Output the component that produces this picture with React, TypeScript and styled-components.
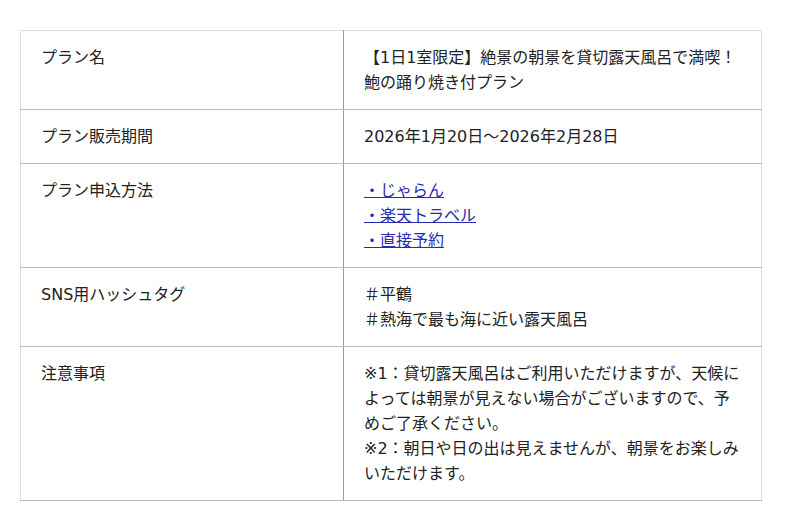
import styled, { createGlobalStyle } from "styled-components";

const GlobalStyle = createGlobalStyle`
    body {
        margin: 0;
        background: #fff;
        font-family: "DejaVu Sans", "Noto Sans CJK JP", sans-serif;
        color: #222;
    }
`;

interface PlanRow {
    label: string;
    lines: string[];
    links?: boolean;
}

const rows: PlanRow[] = [
    { label: "プラン名", lines: ["【1日1室限定】絶景の朝景を貸切露天風呂で満喫！", "鮑の踊り焼き付プラン"] },
    { label: "プラン販売期間", lines: ["2026年1月20日～2026年2月28日"] },
    { label: "プラン申込方法", lines: ["・じゃらん", "・楽天トラベル", "・直接予約"], links: true },
    { label: "SNS用ハッシュタグ", lines: ["＃平鶴", "＃熱海で最も海に近い露天風呂"] },
    {
        label: "注意事項",
        lines: [
            "※1：貸切露天風呂はご利用いただけますが、天候によっては朝景が見えない場合がございますので、予めご了承ください。",
            "※2：朝日や日の出は見えませんが、朝景をお楽しみいただけます。",
        ],
    },
];

export default function App() {
    return (
        <>
            <GlobalStyle />
            <Page>
                <Table>
                    <tbody>
                        {rows.map((row) => (
                            <tr key={row.label}>
                                <LabelCell>{row.label}</LabelCell>
                                <ValueCell>
                                    {row.lines.map((line) =>
                                        row.links ? (
                                            <Line key={line}>
                                                <PlanLink href="#">{line}</PlanLink>
                                            </Line>
                                        ) : (
                                            <Line key={line}>{line}</Line>
                                        )
                                    )}
                                </ValueCell>
                            </tr>
                        ))}
                    </tbody>
                </Table>
            </Page>
        </>
    );
}

const Page = styled.div`
    padding: 30px 20px;
`;

const Table = styled.table`
    width: 742px;
    border-collapse: collapse;
    border: 1px solid #ddd;
    table-layout: fixed;
    font-size: 16px;
    line-height: 25px;
`;

const Cell = styled.td`
    padding: 14px 20px;
    vertical-align: top;
    border-bottom: 1px solid #bbb;
    text-align: left;
    &:last-child {
        border-right: 1px solid #ddd;
    }
`;

const LabelCell = styled(Cell)`
    width: 282px;
    border-right: 1px solid #999;
`;

const ValueCell = styled(Cell)``;

const Line = styled.div`
    white-space: normal;
`;

const PlanLink = styled.a`
    color: #2a2ab0;
    text-decoration: underline;
`;
